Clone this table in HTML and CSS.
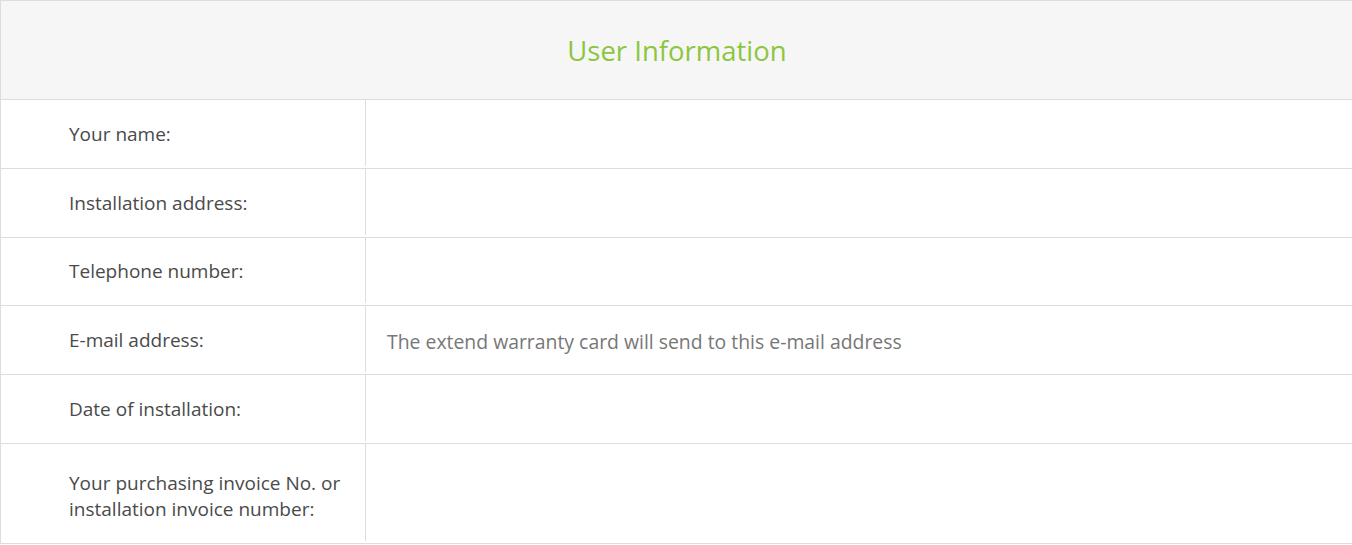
FILE: index.html
```html
<!DOCTYPE html>
<html lang="en">
<head>
<meta charset="utf-8">
<title>User Information</title>
<link rel="stylesheet" href="styles.css">
</head>
<body>
<div class="info-table">
  <div class="info-head">User Information</div>
  <div class="info-row">
    <div class="info-label">Your name:</div>
    <div class="info-value"></div>
  </div>
  <div class="info-row">
    <div class="info-label">Installation address:</div>
    <div class="info-value"></div>
  </div>
  <div class="info-row">
    <div class="info-label">Telephone number:</div>
    <div class="info-value"></div>
  </div>
  <div class="info-row">
    <div class="info-label">E-mail address:</div>
    <div class="info-value"><span class="hint">The extend warranty card will send to this e-mail address</span></div>
  </div>
  <div class="info-row">
    <div class="info-label">Date of installation:</div>
    <div class="info-value"></div>
  </div>
  <div class="info-row info-row-tall">
    <div class="info-label">Your purchasing invoice No. or installation invoice number:</div>
    <div class="info-value"></div>
  </div>
</div>
</body>
</html>
```

FILE: styles.css
```css
* { box-sizing: border-box; }
html, body { margin: 0; padding: 0; background: #fff; }
body {
  font-family: "Open Sans", "Noto Sans", "Liberation Sans", sans-serif;
  color: #555;
  overflow: hidden;
}
.info-table {
  width: 1353px;
  border-top: 1px solid #ddd;
  border-left: 1px solid #ddd;
}
.info-head {
  height: 99px;
  background: #f6f6f6;
  border-bottom: 1px solid #ddd;
  display: flex;
  align-items: center;
  justify-content: center;
  color: #8cc63f;
  font-size: 27.5px;
}
.info-row {
  display: grid;
  grid-template-columns: 364px 1fr;
  height: 68.8px;
  border-bottom: 1px solid #ddd;
}
.info-row-tall { height: 100px; }
.info-label {
  display: flex;
  align-items: center;
  padding: 0 10px 0 68px;
  font-size: 19px;
  line-height: 26px;
  color: #4a4a4a;
  letter-spacing: 0;
}
.info-row-tall .info-label { padding-top: 6px; }
.info-value {
  border-left: 1px solid #ddd;
  margin-bottom: 2px;
  display: flex;
  align-items: center;
  padding-left: 21px;
}
.hint {
  font-size: 19.4px;
  color: #777;
  margin-top: 4px;
}
```
